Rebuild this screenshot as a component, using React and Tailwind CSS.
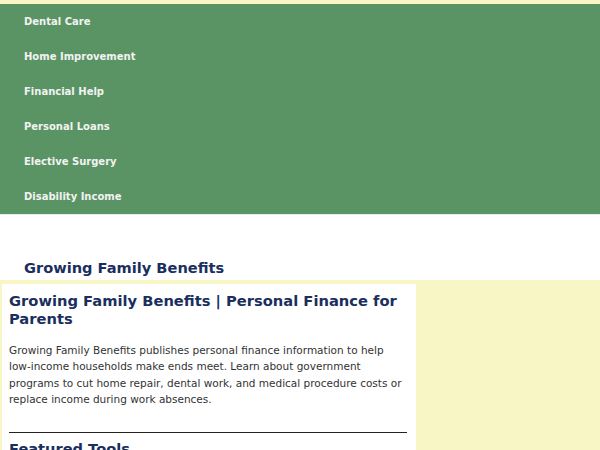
export default function App() {
  const links = ['Dental Care', 'Home Improvement', 'Financial Help', 'Personal Loans', 'Elective Surgery', 'Disability Income'];
  return (
    <div className="min-h-[450px] bg-white font-['DejaVu_Sans',sans-serif]">
      <div className="h-[4px] bg-[#f8f6c4]" />
      <nav className="bg-[#5b9464] border-b border-[#e6ece6]">
        <ul>
          {links.map((l) => (
            <li key={l} className="h-[35px] flex items-center pl-[24px] text-[10px] font-bold text-[#f2f2f2]">
              {l}
            </li>
          ))}
        </ul>
      </nav>
      <div className="h-[65px] flex items-end pl-[24px] pb-[3px]">
        <div className="text-[14.6px] font-bold text-[#1b2f5e] leading-[18px]">Growing Family Benefits</div>
      </div>
      <div className="bg-[#f8f6c4] pt-[4px] flex">
        <main className="w-[414px] ml-[2px] bg-white pl-[7px] pr-[9px] pt-[8px] pb-[20px]">
          <h1 className="text-[14.7px] font-bold text-[#1b2f5e] leading-[18px]">
            Growing Family Benefits | Personal Finance for Parents
          </h1>
          <p className="mt-[14px] text-[10.5px] leading-[16.3px] text-[#333]">
            Growing Family Benefits publishes personal finance information to help low-income households make ends meet. Learn about government programs to cut home repair, dental work, and medical procedure costs or replace income during work absences.
          </p>
          <hr className="mt-[25px] border-t-[1.5px] border-[#222]" />
          <h2 className="mt-[7px] text-[14.6px] font-bold text-[#1b2f5e] leading-[18px]">Featured Tools</h2>
        </main>
        <div className="flex-1" />
      </div>
    </div>
  );
}
